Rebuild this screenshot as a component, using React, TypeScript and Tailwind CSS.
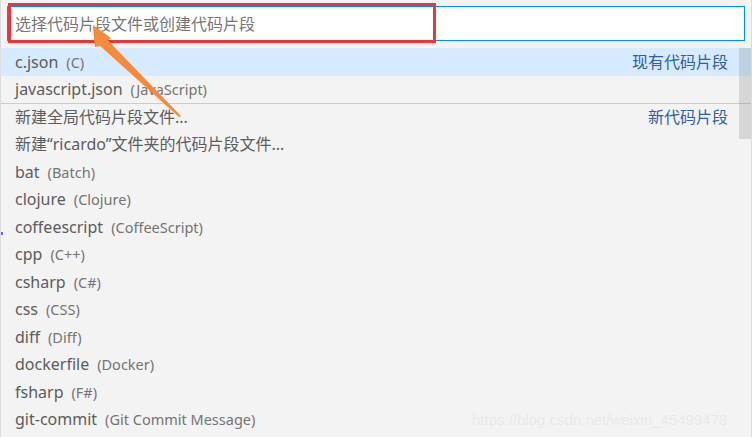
const items: { label: string; desc?: string; right?: string; active?: boolean; sep?: boolean }[] = [
  { label: "c.json", desc: "(C)", right: "现有代码片段", active: true },
  { label: "javascript.json", desc: "(JavaScript)" },
  { label: "新建全局代码片段文件...", right: "新代码片段", sep: true },
  { label: "新建“ricardo”文件夹的代码片段文件..." },
  { label: "bat", desc: "(Batch)" },
  { label: "clojure", desc: "(Clojure)" },
  { label: "coffeescript", desc: "(CoffeeScript)" },
  { label: "cpp", desc: "(C++)" },
  { label: "csharp", desc: "(C#)" },
  { label: "css", desc: "(CSS)" },
  { label: "diff", desc: "(Diff)" },
  { label: "dockerfile", desc: "(Docker)" },
  { label: "fsharp", desc: "(F#)" },
  { label: "git-commit", desc: "(Git Commit Message)" },
];

const App: React.FC = () => {
  return (
    <div className="relative w-[752px] h-[437px] overflow-hidden bg-[#f3f3f3] border-l border-r border-[#dcdcdc] font-['Noto_Sans','Noto_Sans_CJK_SC',sans-serif]">
      {/* Search box */}
      <div className="px-[6px] pt-[6px]">
        <div className="h-[35px] border border-[#0090f1] bg-white flex items-center pl-[7px] text-[16px] text-[#777777]">
          选择代码片段文件或创建代码片段
        </div>
      </div>

      {/* List */}
      <div className="mt-[7px]">
        {items.map((it) => (
          <div
            key={it.label}
            className={`h-[27.5px] flex items-center justify-between pl-[14px] pr-[23px] ${it.active ? "bg-[#d6ebff]" : ""} ${it.sep ? "border-t border-[#cbcbd3]" : ""}`}
          >
            <div className="flex items-baseline gap-[8px] whitespace-nowrap">
              <span className="text-[16px] text-[#5c5c5c]">{it.label}</span>
              {it.desc && <span className="text-[14.5px] text-[#747474]">{it.desc}</span>}
            </div>
            {it.right && <span className="text-[16px] text-[#2e5ea8]">{it.right}</span>}
          </div>
        ))}
      </div>

      {/* scrollbar */}
      <div className="absolute right-0 top-[48px] w-[12px] h-[91px] bg-[rgba(100,100,100,0.2)]" />

      {/* left marker */}
      <div className="absolute left-0 top-[232px] w-[2px] h-[3px] bg-[#6a5cff]" />

      {/* annotation */}
      <div className="absolute left-[7px] top-[3px] w-[428px] h-[40px] border-[3px] border-[#e8363a]" />
      <svg className="absolute left-0 top-0" width="752" height="437" viewBox="0 0 752 437">
        <polygon points="92,25 180,116 178,117 97,44 94,45" fill="#f58a3a" />
        <polygon points="92,25 110,38 99,46 94,47" fill="#f58a3a" />
      </svg>

      {/* watermark */}
      <div className="absolute left-[471px] top-[409px] text-[15px] text-[#e6e6e6] font-['Liberation_Sans',sans-serif] [text-shadow:0_0_1px_#ffffff]">
        https://blog.csdn.net/weixin_45499478
      </div>
    </div>
  );
};

export default App;
